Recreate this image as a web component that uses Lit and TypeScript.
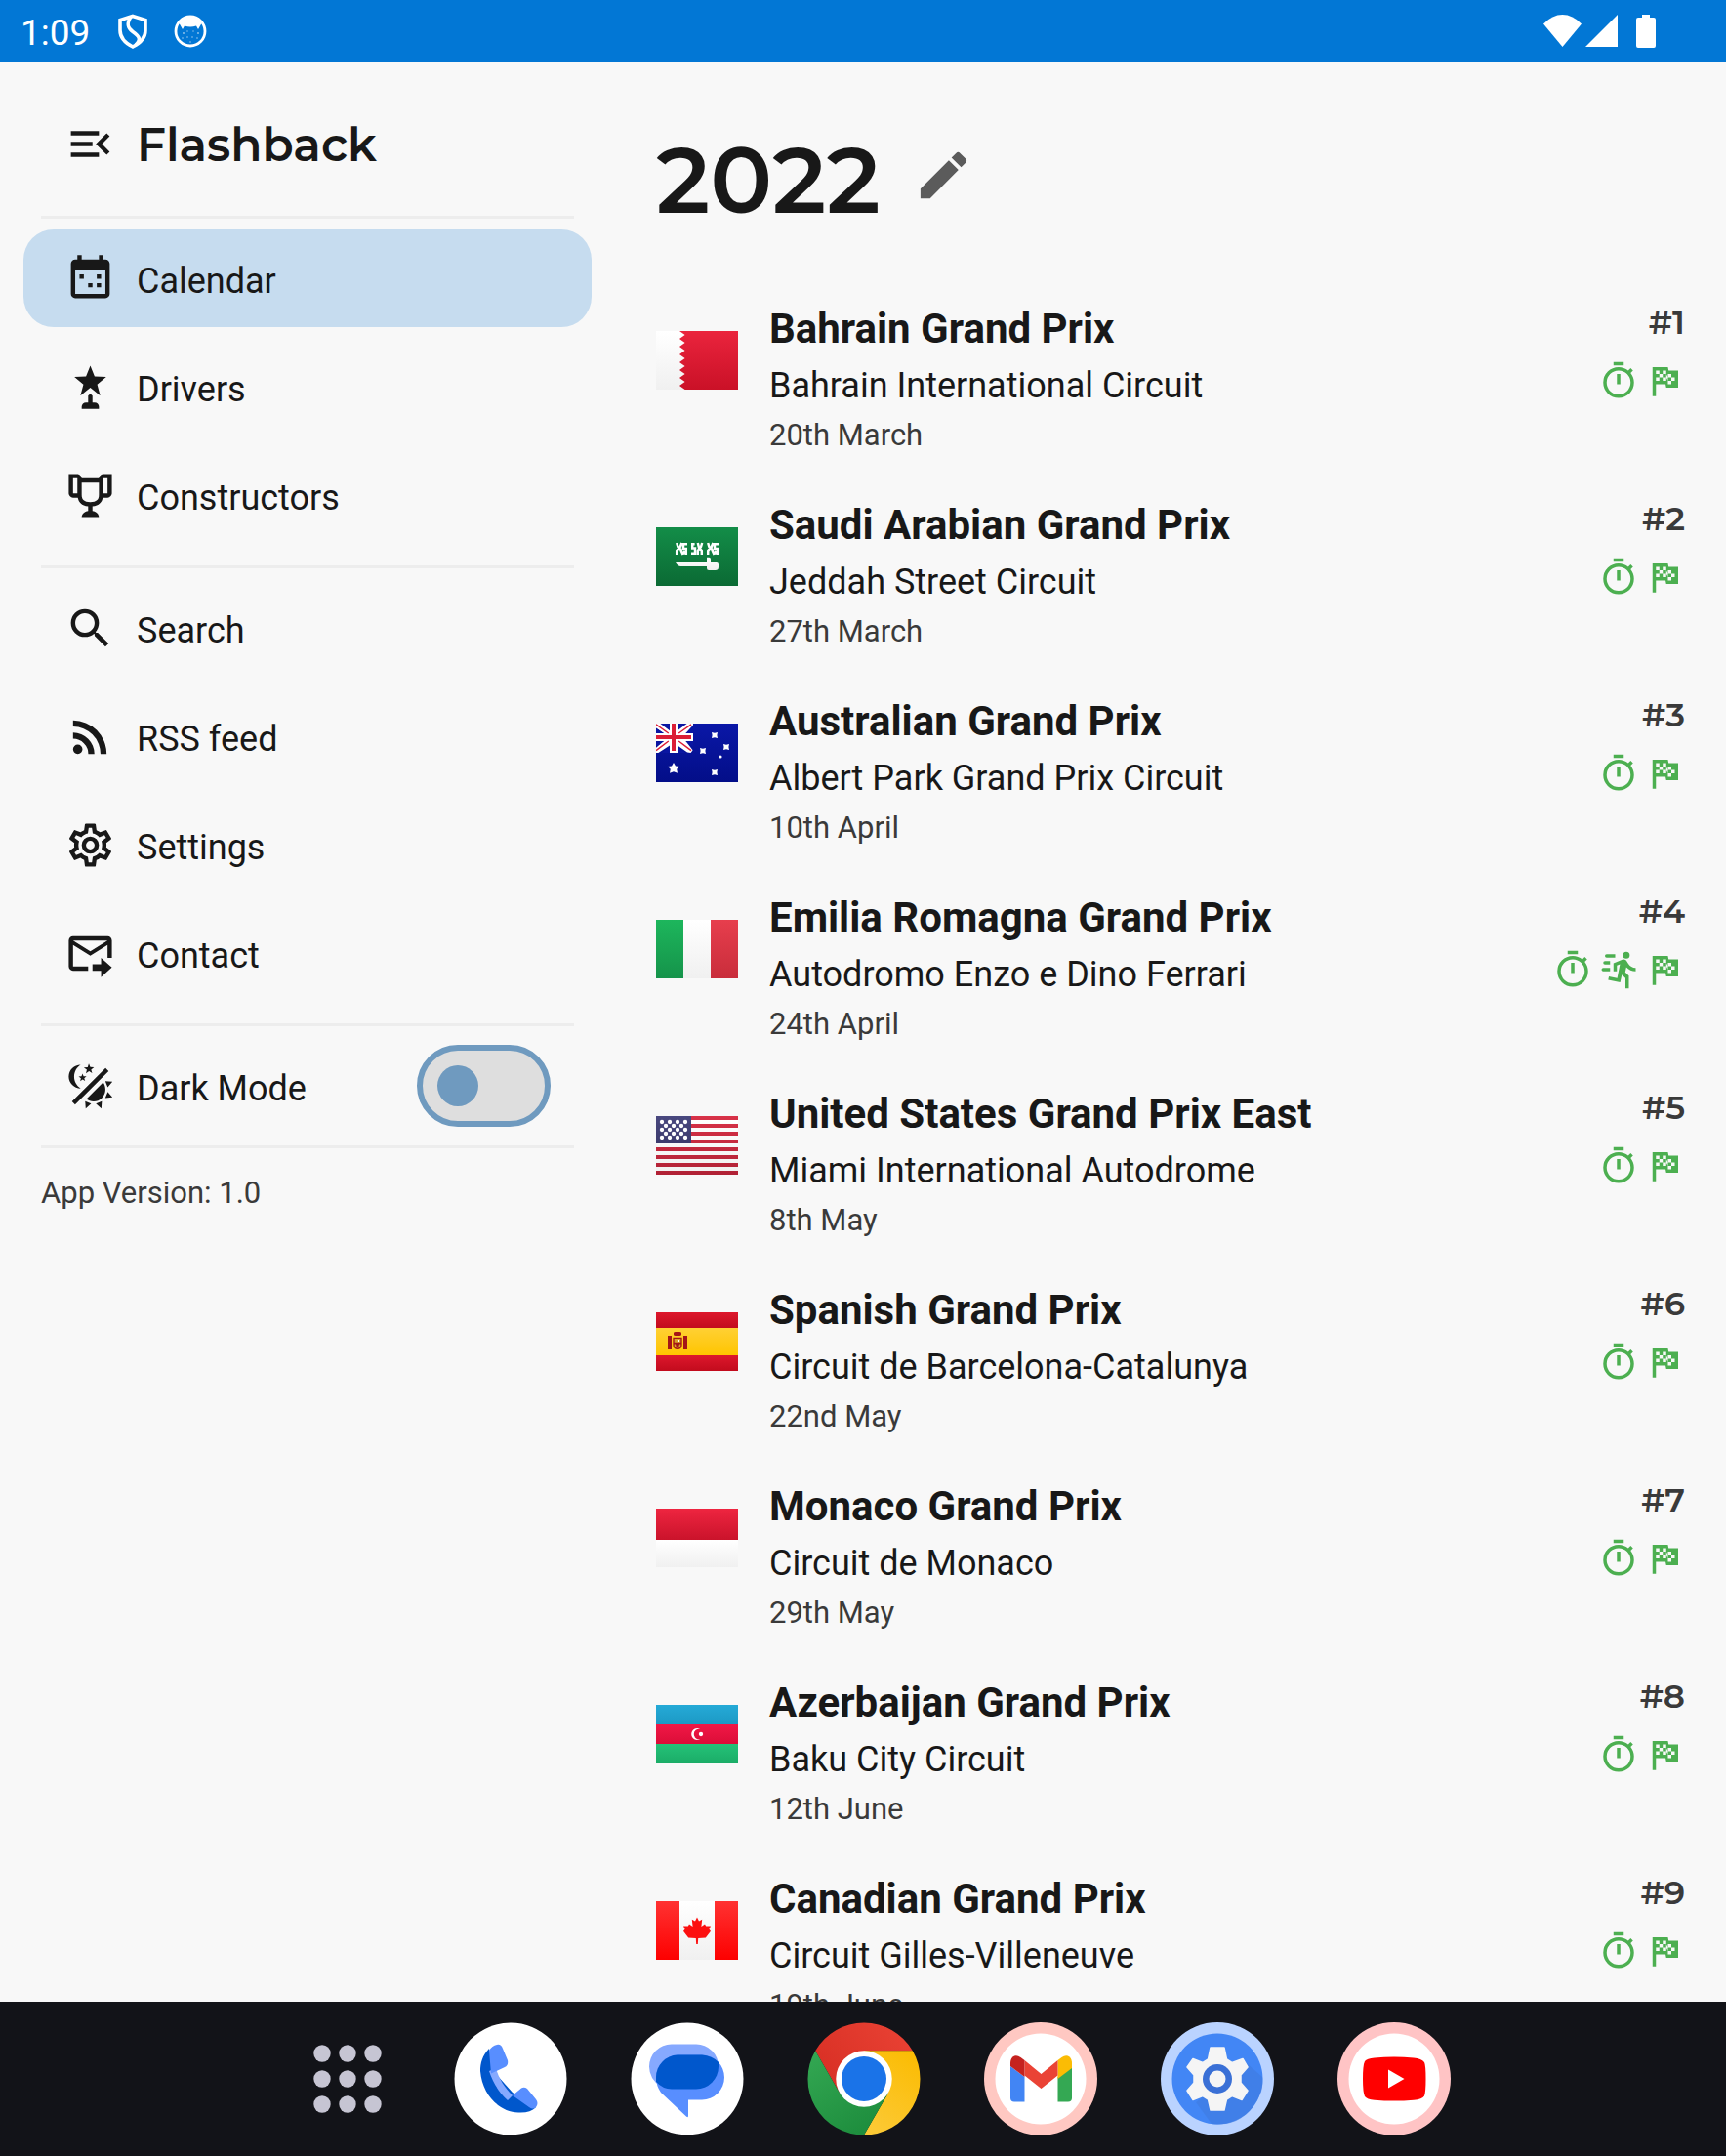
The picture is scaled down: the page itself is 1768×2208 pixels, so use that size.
import { LitElement, html, svg, css } from "lit";
import { customElement, property, state } from "lit/decorators.js";
import { classMap } from "lit/directives/class-map.js";

const ICONS: Record<string, string> = {
  menuOpen:
    "M21,15.61L19.59,17L14.58,12L19.59,7L21,8.39L17.44,12L21,15.61M3,6H16V8H3V6M3,13V11H13V13H3M3,18V16H16V18H3Z",
  calendar:
    "M19,19H5V8H19V19M16,1V3H8V1H6V3H5C3.89,3 3,3.89 3,5V19A2,2 0 0,0 5,21H19A2,2 0 0,0 21,19V5C21,3.89 20.1,3 19,3H18V1H16M7,10V12H9V10H7M15,10V12H17V10H15M11,14V16H13V14H11M15,14V16H17V14H15Z",
  drivers:
    "M15.2,10.7L16.6,16L12,12.2L7.4,16L8.8,10.8L4.6,7.3L10,7L12,2L14,7L19.4,7.3L15.2,10.7M14,19.1H13V16L12,15L11,16V19.1H10A2,2 0 0,0 8,21.1V22.1H16V21.1A2,2 0 0,0 14,19.1Z",
  constructors:
    "M18 2C17.1 2 16 3 16 4H8C8 3 6.9 2 6 2H2V11C2 12 3 13 4 13H6.2C6.6 15 7.9 16.7 11 17V19.08C8 19.54 8 22 8 22H16C16 22 16 19.54 13 19.08V17C16.1 16.7 17.4 15 17.8 13H20C21 13 22 12 22 11V2H18M6 11H4V4H6V11M16 11.5C16 13.43 15.42 15 12 15C8.59 15 8 13.43 8 11.5V6H16V11.5M20 11H18V4H20V11Z",
  search:
    "M9.5,3A6.5,6.5 0 0,1 16,9.5C16,11.11 15.41,12.59 14.44,13.73L14.71,14H15.5L20.5,19L19,20.5L14,15.5V14.71L13.73,14.44C12.59,15.41 11.11,16 9.5,16A6.5,6.5 0 0,1 3,9.5A6.5,6.5 0 0,1 9.5,3M9.5,5C7,5 5,7 5,9.5C5,12 7,14 9.5,14C12,14 14,12 14,9.5C14,7 12,5 9.5,5Z",
  rss:
    "M6.18,15.64A2.18,2.18 0 0,1 8.36,17.82C8.36,19 7.38,20 6.18,20C5,20 4,19 4,17.82A2.18,2.18 0 0,1 6.18,15.64M4,4.44A15.56,15.56 0 0,1 19.56,20H16.73A12.73,12.73 0 0,0 4,7.27V4.44M4,10.1A9.9,9.9 0 0,1 13.9,20H11.07A7.07,7.07 0 0,0 4,12.93V10.1Z",
  settings:
    "M12,8A4,4 0 0,1 16,12A4,4 0 0,1 12,16A4,4 0 0,1 8,12A4,4 0 0,1 12,8M12,10A2,2 0 0,0 10,12A2,2 0 0,0 12,14A2,2 0 0,0 14,12A2,2 0 0,0 12,10M10,22C9.75,22 9.54,21.82 9.5,21.58L9.13,18.93C8.5,18.68 7.96,18.34 7.44,17.94L4.95,18.95C4.73,19.03 4.46,18.95 4.34,18.73L2.34,15.27C2.21,15.05 2.27,14.78 2.46,14.63L4.57,12.97L4.5,12L4.57,11L2.46,9.37C2.27,9.22 2.21,8.95 2.34,8.73L4.34,5.27C4.46,5.05 4.73,4.96 4.95,5.05L7.44,6.05C7.96,5.66 8.5,5.32 9.13,5.07L9.5,2.42C9.54,2.18 9.75,2 10,2H14C14.25,2 14.46,2.18 14.5,2.42L14.87,5.07C15.5,5.32 16.04,5.66 16.56,6.05L19.05,5.05C19.27,4.96 19.54,5.05 19.66,5.27L21.66,8.73C21.79,8.95 21.73,9.22 21.54,9.37L19.43,11L19.5,12L19.43,13L21.54,14.63C21.73,14.78 21.79,15.05 21.66,15.27L19.66,18.73C19.54,18.95 19.27,19.04 19.05,18.95L16.56,17.95C16.04,18.34 15.5,18.68 14.87,18.93L14.5,21.58C14.46,21.82 14.25,22 14,22H10M11.25,4L10.88,6.61C9.68,6.86 8.62,7.5 7.85,8.39L5.44,7.35L4.69,8.65L6.8,10.2C6.4,11.37 6.4,12.64 6.8,13.8L4.68,15.36L5.43,16.66L7.86,15.62C8.63,16.5 9.68,17.14 10.87,17.38L11.24,20H12.76L13.13,17.39C14.32,17.14 15.37,16.5 16.14,15.62L18.57,16.66L19.32,15.36L17.2,13.81C17.6,12.64 17.6,11.37 17.2,10.2L19.31,8.65L18.56,7.35L16.15,8.39C15.38,7.5 14.32,6.86 13.12,6.62L12.75,4H11.25Z",
  contact:
    "M4 4C2.9 4 2 4.9 2 6V18C2 19.1 2.9 20 4 20H11V18H4V8L12 13L20 8V14H22V6C22 4.9 21.1 4 20 4H4M20 6L12 11L4 6H20M13 17H17V14L22 18.5L17 23V20H13V17Z",
  theme:
    "M7.5,2C5.71,3.15 4.5,5.18 4.5,7.5C4.5,9.82 5.71,11.85 7.53,13C4.46,13 2,10.54 2,7.5A5.5,5.5 0 0,1 7.5,2M19.07,3.5L20.5,4.93L4.93,20.5L3.5,19.07L19.07,3.5M12.89,5.93L11.41,5L9.97,6L10.39,4.3L9,3.24L10.75,3.12L11.33,1.47L12,3.1L13.73,3.13L12.38,4.26L12.89,5.93M9.59,9.54L8.43,8.81L7.31,9.59L7.65,8.27L6.56,7.44L7.92,7.35L8.37,6.06L8.88,7.33L10.24,7.36L9.19,8.23L9.59,9.54M19,13.5A5.5,5.5 0 0,1 13.5,19C12.28,19 11.15,18.6 10.24,17.93L17.93,10.24C18.6,11.15 19,12.28 19,13.5M14.6,20.08L17.37,18.93L17.13,22.28L14.6,20.08M18.93,17.38L20.08,14.61L22.28,17.15L18.93,17.38M20.08,12.42L18.94,9.64L22.28,9.88L20.08,12.42M9.63,18.93L12.4,20.08L9.87,22.27L9.63,18.93Z",
  pencil:
    "M20.71,7.04C21.1,6.65 21.1,6 20.71,5.63L18.37,3.29C18,2.9 17.35,2.9 16.96,3.29L15.12,5.12L18.87,8.87M3,17.25V21H6.75L17.81,9.93L14.06,6.18L3,17.25Z",
  qualifying:
    "M12,20A7,7 0 0,1 5,13A7,7 0 0,1 12,6A7,7 0 0,1 19,13A7,7 0 0,1 12,20M19.03,7.39L20.45,5.97C20,5.46 19.55,5 19.04,4.56L17.62,6C16.07,4.74 14.12,4 12,4A9,9 0 0,0 3,13A9,9 0 0,0 12,22C17,22 21,17.97 21,13C21,10.88 20.26,8.93 19.03,7.39M11,14H13V8H11M15,1H9V3H15V1Z",
  sprint:
    "M16.5,5.5A2,2 0 0,0 18.5,3.5A2,2 0 0,0 16.5,1.5A2,2 0 0,0 14.5,3.5A2,2 0 0,0 16.5,5.5M12.9,19.4L13.9,15L16,17V23H18V15.5L15.9,13.5L16.5,10.5C17.89,12.09 19.89,13 22,13V11C20.24,11.03 18.6,10.11 17.7,8.6L16.7,7C16.34,6.4 15.7,6 15,6C14.7,6 14.5,6.1 14.2,6.1L9,8.3V13H11V9.6L12.8,8.9L11.2,17L6.3,16L5.9,18L12.9,19.4M4,9A1,1 0 0,1 3,8A1,1 0 0,1 4,7H7V9H4M5,5A1,1 0 0,1 4,4A1,1 0 0,1 5,3H10V5H5M3,13A1,1 0 0,1 2,12A1,1 0 0,1 3,11H7V13H3Z",
  race:
    "M14.4,6H20V16H13L12.6,14H7V21H5V4H14L14.4,6M14,14H16V12H18V10H16V8H14V10L13,8V6H11V8H9V6H7V8H9V10H7V12H9V10H11V12H13V10L14,12V14M11,10V8H13V10H11M14,10H16V12H14V10Z",
};

const icon = (name: string, cls: string) =>
  html`<svg class=${cls} viewBox="0 0 24 24" aria-hidden="true"><path fill="currentColor" d=${ICONS[name]} /></svg>`;

const grad = (id: string, from: string, to: string) => svg`
  <linearGradient id=${id} x1="0" y1="0" x2="0" y2="1">
    <stop offset="0" stop-color=${from} /><stop offset="1" stop-color=${to} />
  </linearGradient>`;

const smallStar = (x: number, y: number) => svg`
  <path fill="#fff" transform="translate(${x} ${y})"
    d="M-.75-.75L0-.55L.75-.75L.6 0L.75.75L0 .55L-.75.75L-.6 0Z" />`;

const usStars = [0, 1, 2, 3, 4].map((row) =>
  (row % 2 ? [2.5, 4.5, 6.5] : [1.5, 3.5, 5.5, 7.5]).map(
    (x) => svg`<circle cx=${x} cy=${1.5 + row} r=".54" fill="#fff" />`
  )
);

const FLAGS: Record<string, unknown> = {
  bahrain: svg`
    <defs>${grad("w", "#fff", "#f0f0f0")}${grad("r", "#ea243d", "#ca1127")}</defs>
    <rect width="21" height="15" fill="url(#w)" />
    <path fill="url(#r)" d="M21 0H6L7.4 1L6 2L7.4 3L6 4L7.4 5L6 6L7.4 7L6 8L7.4 9L6 10L7.4 11L6 12L7.4 13L6 14L7.4 15H21Z" />`,
  saudi: svg`
    <defs>${grad("g", "#138d48", "#0b6a34")}${grad("w", "#fff", "#f0f0f0")}</defs>
    <rect width="21" height="15" fill="url(#g)" />
    <g fill="none" stroke="#fff" stroke-width=".62">
      <path d="M5.3 4L5.6 5L6.3 5.6L6.9 7M6.6 4L6.2 5L5.3 6V7M8 4.3H7V5.5H7.7V7M7 6.9L7.3 6" />
      <path d="M9.9 4.3H9.3V5.4H10V6.7H9M10.7 4L11 5.2L11.7 6V7M11.8 4L11.5 5L10.7 6V7" />
      <path d="M13.3 4L13.6 5L14.3 5.6L14.9 7M14.6 4L14.2 5L13.3 6V7M16 4.3H15V5.5H15.7V7M15 6.9L15.3 6" />
    </g>
    <path fill="url(#w)" d="M5 9H13V7.7H13.6Q14 7.7 14 8.2V9H15.5Q16 9 16 9.5V10.2Q16 11 15.2 11H13.5Q13 11 13 10.5V10H6.3Q5.6 10 5 9Z" />`,
  australia: svg`
    <defs>${grad("b", "#0a17a7", "#030e88")}</defs>
    <rect width="21" height="15" fill="url(#b)" />
    <path fill="#fff" d="M0 0H9.5V.4L7.6 2.5H9.5V4.5H7.6L9.4 6.8L8.9 7.5L8 7.4L5.5 5.6V7.5H3.5V5.6L.6 7.5H0V6.2L2 4.5H0V2.5H2L0 1.2Z" />
    <path fill="#0a16a2" d="M1.1 0H3.5V1.8ZM5.5 0H7.9L5.5 1.8ZM0 1.1L2 2.5H0ZM0 4.5H2L0 5.9ZM1.4 7.5L3.5 6V7.5ZM5.5 6L7.7 7.5H5.5ZM9.5 1.2V2.5H7.6ZM9.5 5.9V4.5H7.6Z" />
    <path stroke="#db1e36" stroke-width=".36" fill="none" d="M0 .2L3.2 2.5M9 .2L5.8 2.5M0 6.9L3.2 4.5M9 6.9L5.8 4.5" />
    <path fill="#db1e36" d="M4 0H5V3H9V4H5V7H4V4H0V3H4Z" />
    <path fill="#fff" d="M4.5 10L5 10.9L6 11L5.3 11.7L5.5 12.7L4.5 12.3L3.5 12.7L3.7 11.7L3 11L4 10.9Z" />
    ${smallStar(15, 3)}${smallStar(18, 6)}${smallStar(12, 7)}${smallStar(15, 12.5)}
    <circle cx="16.5" cy="8.5" r=".4" fill="#fff" />`,
  italy: svg`
    <defs>${grad("g", "#1db65c", "#15934a")}${grad("w", "#fff", "#f0f0f0")}${grad("r", "#e73e4d", "#c92d3b")}</defs>
    <rect width="7" height="15" fill="url(#g)" /><rect x="7" width="7" height="15" fill="url(#w)" />
    <rect x="14" width="7" height="15" fill="url(#r)" />`,
  usa: svg`
    <defs>${grad("w", "#fff", "#f0f0f0")}${grad("r", "#d83248", "#b02135")}${grad("b", "#49487f", "#3c3b6d")}</defs>
    <rect width="21" height="15" fill="url(#w)" />
    <path fill="url(#r)" d="M0 0H21V1H0ZM0 2H21V3H0ZM0 4H21V5H0ZM0 6H21V7H0ZM0 8H21V9H0ZM0 10H21V11H0ZM0 12H21V13H0ZM0 14H21V15H0Z" />
    <rect width="9" height="7" fill="url(#b)" />${usStars}`,
  spain: svg`
    <defs>${grad("r", "#dd172c", "#c20b1d")}${grad("y", "#ffd034", "#ffc500")}</defs>
    <rect width="21" height="4" fill="url(#r)" /><rect y="11" width="21" height="4" fill="url(#r)" />
    <rect y="4" width="21" height="7" fill="url(#y)" />
    <path fill="#a41517" d="M3 6H4V9.5H3ZM7 6H8V9.5H7ZM4.5 5.3Q4.5 5 5 5H6Q6.5 5 6.5 5.3V5.7Q6.5 6 6 6H5Q4.5 6 4.5 5.7Z" />
    <path fill="#d9a02a" stroke="#a41517" stroke-width=".34" d="M4.5 6.6H6.5V8.3Q6.5 9.3 5.5 9.3T4.5 8.3Z" />
    <path fill="#a41517" d="M4.5 7.7H6.5V8.1H6L5.8 8.9H5.2L5 8.1H4.5Z" /><rect x="5.5" y="7" width=".5" height=".5" fill="#fff" />`,
  monaco: svg`
    <defs>${grad("r", "#ee2540", "#ca132b")}${grad("w", "#fff", "#f0f0f0")}</defs>
    <rect width="21" height="8" fill="url(#r)" /><rect y="8" width="21" height="7" fill="url(#w)" />`,
  azerbaijan: svg`
    <defs>${grad("b", "#25aad7", "#1c99c4")}${grad("r", "#f01846", "#dc0d38")}${grad("g", "#24c278", "#1bac67")}</defs>
    <rect width="21" height="5" fill="url(#b)" /><rect y="5" width="21" height="5" fill="url(#r)" />
    <rect y="10" width="21" height="5" fill="url(#g)" />
    <path fill="#fff" d="M11.3 6.2A1.5 1.5 0 1 0 11.3 8.8A1.33 1.33 0 1 1 11.3 6.2Z" />
    <circle cx="11.5" cy="7.5" r=".54" fill="#fff" />`,
  canada: svg`
    <defs>${grad("r", "#ff3232", "#fd0000")}${grad("w", "#fff", "#f0f0f0")}</defs>
    <rect width="21" height="15" fill="url(#w)" />
    <rect width="6" height="15" fill="url(#r)" /><rect x="15" width="6" height="15" fill="url(#r)" />
    <path fill="#fc1010" d="M10.5 4.1L11 5.1L11.8 4.7L11.6 6.5L12.5 5.9L12.8 6.4L14 6.4L13.6 7.2L14 7.7L12.7 9.4L10.8 9.5L10.7 11H10.3L10.2 9.5L8.3 9.4L7 7.7L7.4 7.2L7 6.4L8.2 6.4L8.5 5.9L9.4 6.5L9.2 4.7L10 5.1Z" />`,
};

interface Race {
  flag: string;
  name: string;
  circuit: string;
  date: string;
  sprint?: boolean;
}

const RACES: Race[] = [
  { flag: "bahrain", name: "Bahrain Grand Prix", circuit: "Bahrain International Circuit", date: "20th March" },
  { flag: "saudi", name: "Saudi Arabian Grand Prix", circuit: "Jeddah Street Circuit", date: "27th March" },
  { flag: "australia", name: "Australian Grand Prix", circuit: "Albert Park Grand Prix Circuit", date: "10th April" },
  { flag: "italy", name: "Emilia Romagna Grand Prix", circuit: "Autodromo Enzo e Dino Ferrari", date: "24th April", sprint: true },
  { flag: "usa", name: "United States Grand Prix East", circuit: "Miami International Autodrome", date: "8th May" },
  { flag: "spain", name: "Spanish Grand Prix", circuit: "Circuit de Barcelona-Catalunya", date: "22nd May" },
  { flag: "monaco", name: "Monaco Grand Prix", circuit: "Circuit de Monaco", date: "29th May" },
  { flag: "azerbaijan", name: "Azerbaijan Grand Prix", circuit: "Baku City Circuit", date: "12th June" },
  { flag: "canada", name: "Canadian Grand Prix", circuit: "Circuit Gilles-Villeneuve", date: "19th June" },
];

@customElement("status-bar")
class StatusBar extends LitElement {
  static styles = css`
    :host {
      display: flex;
      align-items: center;
      justify-content: space-between;
      height: 63px;
      padding: 0 71px 0 21px;
      background: #0277d5;
      color: #fff;
      font: 400 37px/40px Roboto, "Liberation Sans", sans-serif;
    }
    .group {
      display: flex;
      align-items: center;
    }
    .notices {
      gap: 26px;
    }
    .time {
      padding-top: 4px;
    }
    svg {
      display: block;
    }
    .battery {
      margin-left: 16px;
    }
  `;
  render() {
    return html`
      <div class="group notices">
        <span class="time">1:09</span>
        <svg width="34" height="36" viewBox="0 0 34 36" fill="none" stroke="#fff" stroke-width="3.6" aria-hidden="true">
          <path d="M18 2.500L31 6.500V17C31 24.500 26 30 18 34C10 30 5 24.500 5 17V6.500Z" />
          <path d="M16 3C11 11 13 15 18 18.500C26 24 26 27 21 32" />
        </svg>
        <svg width="34" height="34" viewBox="0 0 34 34" aria-hidden="true">
          <circle cx="17" cy="17" r="15" fill="none" stroke="#fff" stroke-width="2.8" />
          <path fill="#fff" d="M5 8Q10 2 17 2T29 8L25 15L23 11.500Q17 13.500 11 11.500L9 15Z" />
          <g fill="#fff" opacity=".6">
            <circle cx="10" cy="19" r=".9" /><circle cx="14" cy="17" r=".7" /><circle cx="20" cy="17" r=".7" />
            <circle cx="25" cy="19" r=".9" /><circle cx="9" cy="24" r=".8" /><circle cx="14" cy="23" r=".8" />
            <circle cx="19" cy="23" r=".8" /><circle cx="24" cy="24" r=".8" /><circle cx="17" cy="28" r=".8" />
          </g>
        </svg>
      </div>
      <div class="group">
        <svg width="43" height="34" viewBox="0 0 43 34" aria-hidden="true">
          <path fill="#fff" d="M0 9.500Q9 0 19.500 0T39 9.500L19.500 33Z" />
        </svg>
        <svg width="33" height="34" viewBox="0 0 33 34" aria-hidden="true"><path fill="#fff" d="M0 33H33V0Z" /></svg>
        <svg class="battery" width="24" height="34" viewBox="0 0 24 34" aria-hidden="true">
          <path fill="#fff" d="M9 0H17V3H21Q23 3 23 5V32Q23 34 21 34H5Q3 34 3 32V5Q3 3 5 3H9Z" />
        </svg>
      </div>
    `;
  }
}

@customElement("nav-drawer")
class NavDrawer extends LitElement {
  @state() private active = "Calendar";

  static styles = css`
    :host {
      display: block;
      box-sizing: border-box;
      flex: 0 0 630px;
      padding: 32px 24px 0 24px;
      color: #181818;
      font: 400 36px/48px Roboto, "Liberation Sans", sans-serif;
    }
    button {
      border: 0;
      padding: 0;
      background: none;
      color: inherit;
      font: inherit;
      cursor: pointer;
    }
    .icon {
      display: block;
      flex: none;
      width: 53px;
      height: 53px;
    }
    .brand {
      display: flex;
      align-items: center;
      gap: 21px;
      height: 104px;
      padding: 0 42px 22px;
    }
    .title {
      margin: 0;
      padding-top: 4px;
      font: 600 47px/56px Montserrat, Inter, sans-serif;
    }
    .rule {
      height: 3px;
      margin: 0 18px;
      border: 0;
      background: #ededed;
    }
    .list {
      display: flex;
      flex-direction: column;
      gap: 11px;
      margin: 0;
      padding: 11px 0 22px;
      list-style: none;
    }
    .item {
      display: flex;
      align-items: center;
      gap: 21px;
      box-sizing: border-box;
      width: 100%;
      height: 100px;
      padding: 0 42px;
      border-radius: 31px;
      color: inherit;
      text-decoration: none;
    }
    .label {
      padding-top: 5px;
    }
    .active {
      background: #c6dcef;
    }
    .dark {
      display: flex;
      align-items: center;
      gap: 21px;
      height: 122px;
      padding: 0 42px;
    }
    .dark .label {
      flex: 1;
    }
    .switch {
      appearance: none;
      box-sizing: border-box;
      display: flex;
      align-items: center;
      width: 137px;
      height: 84px;
      margin: 0;
      padding: 0 15px;
      border: 6px solid #6f9abf;
      border-radius: 42px;
      background: #dedede;
      cursor: pointer;
    }
    .switch::before {
      content: "";
      width: 42px;
      height: 42px;
      border-radius: 50%;
      background: #6f9abf;
    }
    .switch:checked {
      justify-content: flex-end;
    }
    .version {
      margin: 22px 18px;
      color: #3a3a3a;
      font-size: 31px;
    }
  `;

  private item(name: string, label: string) {
    return html`<li>
      <a
        href="#${name}"
        class=${classMap({ item: true, active: this.active === label })}
        @click=${() => (this.active = label)}
        >${icon(name, "icon")}<span class="label">${label}</span></a
      >
    </li>`;
  }

  render() {
    return html`
      <header class="brand">
        <button aria-label="Collapse menu">${icon("menuOpen", "icon")}</button>
        <h2 class="title">Flashback</h2>
      </header>
      <hr class="rule" />
      <ul class="list">
        ${this.item("calendar", "Calendar")} ${this.item("drivers", "Drivers")}
        ${this.item("constructors", "Constructors")}
      </ul>
      <hr class="rule" />
      <ul class="list">
        ${this.item("search", "Search")} ${this.item("rss", "RSS feed")} ${this.item("settings", "Settings")}
        ${this.item("contact", "Contact")}
      </ul>
      <hr class="rule" />
      <div class="dark">
        ${icon("theme", "icon")}
        <label class="label" for="dark">Dark Mode</label>
        <input class="switch" id="dark" type="checkbox" role="switch" />
      </div>
      <hr class="rule" />
      <p class="version">App Version: 1.0</p>
    `;
  }
}

@customElement("race-row")
class RaceRow extends LitElement {
  @property({ attribute: false }) race!: Race;
  @property({ type: Number }) round = 1;

  static styles = css`
    :host {
      display: flex;
      gap: 32px;
      height: 201px;
      color: #181818;
      font: 400 36px/50px Roboto, "Liberation Sans", sans-serif;
    }
    .flag {
      display: block;
      flex: none;
      width: 84px;
      height: 60px;
      margin-top: 35px;
    }
    .info {
      flex: 1;
      min-width: 0;
    }
    .name {
      margin: 0;
      padding-top: 4px;
      font-size: 42px;
      font-weight: 700;
      line-height: 58px;
    }
    .circuit,
    .date {
      margin: 0;
    }
    .circuit {
      line-height: 58px;
    }
    .date {
      color: #3a3a3a;
      font-size: 31px;
      line-height: 44px;
    }
    .side {
      display: flex;
      flex-direction: column;
      align-items: flex-end;
      gap: 14px;
      color: #3a3a3a;
    }
    .round {
      padding-top: 1px;
      font: 600 34px/50px Montserrat, Inter, sans-serif;
    }
    .sessions {
      display: flex;
      gap: 5px;
      color: #4caf50;
    }
    .session {
      display: block;
      width: 42px;
      height: 42px;
    }
  `;

  render() {
    const r = this.race;
    return html`
      <svg class="flag" viewBox="0 0 21 15" aria-hidden="true">${FLAGS[r.flag]}</svg>
      <div class="info">
        <h3 class="name">${r.name}</h3>
        <p class="circuit">${r.circuit}</p>
        <p class="date">${r.date}</p>
      </div>
      <div class="side">
        <span class="round">#${this.round}</span>
        <div class="sessions">
          ${icon("qualifying", "session")} ${r.sprint ? icon("sprint", "session") : ""} ${icon("race", "session")}
        </div>
      </div>
    `;
  }
}

@customElement("app-dock")
class AppDock extends LitElement {
  static styles = css`
    :host {
      display: flex;
      align-items: center;
      justify-content: center;
      gap: 35px;
      height: 158px;
      background: #121318;
    }
    button {
      display: block;
      border: 0;
      padding: 0;
      background: none;
      cursor: pointer;
    }
    .grid {
      display: flex;
      justify-content: center;
      width: 147px;
    }
    .apps {
      display: flex;
      gap: 65px;
    }
    svg {
      display: block;
    }
    .app {
      width: 116px;
      height: 116px;
    }
  `;

  private app(label: string, art: unknown) {
    return html`<button aria-label=${label}>
      <svg class="app" viewBox="0 0 116 116" aria-hidden="true">${art}</svg>
    </button>`;
  }

  render() {
    const dots = [9, 35, 61].map((y) => [10, 36, 62].map((x) => svg`<circle cx=${x} cy=${y} r="8.7" />`));
    return html`
      <button class="grid" aria-label="All apps">
        <svg width="72" height="70" viewBox="0 0 72 70" fill="#c6c5d3" aria-hidden="true">${dots}</svg>
      </button>
      <div class="apps">
        ${this.app(
          "Phone",
          svg`<circle cx="58" cy="58" r="57.5" fill="#fff" />
          <path fill="#0057cc" d="M36 27C29 34 27 42 27 50C29 74 46 92 66 92.500C74 93 80 91 84 87L60 72L42 52Z" />
          <path fill="#86a9ff" d="M36 50L43 47C46 58 52 67 60 75L55 80C46 72 40 62 36 50Z" />
          <path fill="#588eff" d="M36 29Q39 24 44 23Q48 22 50 27L55 39Q56 44 52 46L38 52.500Z" />
          <path fill="#588eff" d="M60 75L69 67.500Q72 66 75 68L84 79Q87 83 84 87Q81 90 77 87Z" />`
        )}
        ${this.app(
          "Messages",
          svg`<circle cx="58" cy="58" r="57.5" fill="#fff" />
          <path fill="#86a9ff" d="M42 22.500H67A22.800 22.800 0 0 1 90 45.500Q90 60 78 66L31 66Q19 58 19 45.500A22.800 22.800 0 0 1 42 22.500Z" />
          <path fill="#588eff" d="M48 33.500H73A23 23 0 0 1 73 79.500H59V96Q59 98 57 96.500L31 72Q26 65 26 56A23 23 0 0 1 48 33.500Z" />
          <path fill="#0057cc" d="M48 33.500H73Q83 34 90 41V45.500A23 23 0 0 1 67 68.500H42Q33 68.500 26 61V56A23 23 0 0 1 48 33.500Z" />`
        )}
        ${this.app(
          "Chrome",
          svg`<defs>
            <linearGradient id="cr" x1="0" y1=".6" x2="1" y2="0"><stop stop-color="#d93025" /><stop offset="1" stop-color="#ea4335" /></linearGradient>
            <linearGradient id="cy" x1=".8" y1="0" x2=".3" y2="1"><stop stop-color="#fbbc04" /><stop offset="1" stop-color="#fcc934" /></linearGradient>
            <linearGradient id="cg" x1="0" y1="0" x2=".6" y2="1"><stop stop-color="#34a853" /><stop offset="1" stop-color="#1e8e3e" /></linearGradient>
          </defs>
          <path fill="url(#cr)" d="M58 58V29.250H107.800A57.500 57.500 0 0 0 8.200 29.250L33.100 72.400Z" />
          <path fill="url(#cy)" d="M58 58L82.900 72.400L58 115.500A57.500 57.500 0 0 0 107.800 29.250H58Z" />
          <path fill="url(#cg)" d="M58 58L33.100 72.400L8.200 29.250A57.500 57.500 0 0 0 58 115.500L82.900 72.400Z" />
          <circle cx="58" cy="58" r="28.75" fill="#fff" /><circle cx="58" cy="58" r="23" fill="#1a73e8" />`
        )}
        ${this.app(
          "Gmail",
          svg`<circle cx="58" cy="58" r="58" fill="#ffc8c2" /><circle cx="58" cy="58" r="46.5" fill="#fff" />
          <path fill="#4285f4" d="M27 45L41.500 56V81.500H31Q27 81.500 27 77.500Z" />
          <path fill="#34a853" d="M90 45L75.500 56V81.500H86Q90 81.500 90 77.500Z" />
          <path fill="#fbbc04" d="M75.500 39L79.500 36Q84 33 87.500 35.500Q90 37.500 90 42V47L75.500 58Z" />
          <path fill="#ea4335" d="M41.500 39L58.500 53L75.500 39V54.500L58.500 68L41.500 54.500Z" />
          <path fill="#c5221f" d="M41.500 39L37.500 36Q33 33 29.500 35.500Q27 37.500 27 42V45L41.500 56Z" />`
        )}
        ${this.app(
          "Settings",
          svg`<circle cx="58" cy="58" r="58" fill="#bad3ff" /><circle cx="58" cy="58" r="46.5" fill="#4286f5" />
          <path fill="#3f7be0" opacity=".6" d="M36 82L52 104Q55 104.500 60 104.500Q90 104 103 71Q105 63 104 56L88 42Z" />
          <path fill="#f5f5f5" d="M51 26H65L67.500 38L73 41.500L84 37.500L89 46L82 54V62L89 70L83 79.500L73 75.500L67.500 79L65 90H51L48.500 79L43 75.500L33 79.500L27 70L34 62V54L27 46L33 37.500L43 41.500L48.500 38Z" stroke="#f5f5f5" stroke-width="1.5" stroke-linejoin="round" />
          <circle cx="58" cy="58" r="15" fill="#3a70d6" /><circle cx="58" cy="58" r="8.5" fill="#f5f5f5" />`
        )}
        ${this.app(
          "YouTube",
          svg`<circle cx="58" cy="58" r="58" fill="#ffc4c5" /><circle cx="58" cy="58" r="46.5" fill="#fff" />
          <path fill="#f00" d="M38 36.500Q58 34.500 78 36.500Q86 37 89 41Q90.500 44 90.500 58Q90.500 72 89 75.500Q87 79 78 79.700Q58 81.500 38 79.700Q30 79 28 76Q26 72 26 58Q26 44 28 40Q30 37 38 36.500Z" />
          <path fill="#fff" d="M52 48.500V67.500L68.500 58Z" />`
        )}
      </div>
    `;
  }
}

@customElement("app-root")
class AppRoot extends LitElement {
  static styles = css`
    :host {
      display: flex;
      flex-direction: column;
      height: 100vh;
      background: #f8f8f8;
      color: #181818;
    }
    .body {
      display: flex;
      flex: 1;
      min-height: 0;
      overflow: hidden;
    }
    .main {
      flex: 1;
      min-width: 0;
      padding: 62px 42px 0;
    }
    .head {
      display: flex;
      align-items: center;
      gap: 33px;
      height: 118px;
      margin-bottom: 61px;
    }
    .year {
      margin: 0;
      font: 600 95px/118px Montserrat, Inter, sans-serif;
    }
    .edit {
      border: 0;
      padding: 0 0 10px;
      background: none;
      color: #5b5b5b;
      cursor: pointer;
    }
    .pencil {
      display: block;
      width: 63px;
      height: 63px;
    }
  `;

  render() {
    return html`
      <status-bar></status-bar>
      <div class="body">
        <nav-drawer></nav-drawer>
        <main class="main">
          <div class="head">
            <h1 class="year">2022</h1>
            <button class="edit" aria-label="Change season">${icon("pencil", "pencil")}</button>
          </div>
          ${RACES.map((r, i) => html`<race-row .race=${r} .round=${i + 1}></race-row>`)}
        </main>
      </div>
      <app-dock></app-dock>
    `;
  }
}
